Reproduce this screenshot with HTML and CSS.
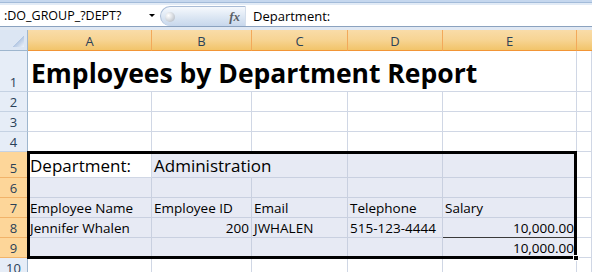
FILE: index.html
```html
<!DOCTYPE html>
<html lang="en">
<head>
  <meta charset="UTF-8">
  <title>Employees by Department Report</title>
  <link rel="stylesheet" href="styles.css">
</head>
<body>
  <div class="top-band"></div>
  <div class="formula-bar">
    <div class="name-box">
      <span class="name-text">:DO_GROUP_?DEPT?</span>
      <span class="drop-arrow"></span>
    </div>
    <div class="fx-pill">
      <span class="knob"></span>
      <span class="fx">fx</span>
    </div>
    <div class="formula-text">Department:</div>
  </div>
  <div class="bar-strip"></div>

  <div class="sheet-wrap">
    <div class="sheet">
      <!-- column headers -->
      <div class="corner"><span class="corner-tri"></span></div>
      <div class="ch">A</div>
      <div class="ch">B</div>
      <div class="ch">C</div>
      <div class="ch">D</div>
      <div class="ch">E</div>
      <div class="ch last"></div>

      <!-- row 1 -->
      <div class="rh">1</div>
      <div class="c title span5">Employees by Department Report</div>
      <div class="c"></div>

      <!-- rows 2-4 -->
      <div class="rh">2</div>
      <div class="c"></div><div class="c"></div><div class="c"></div><div class="c"></div><div class="c"></div><div class="c"></div>
      <div class="rh">3</div>
      <div class="c"></div><div class="c"></div><div class="c"></div><div class="c"></div><div class="c"></div><div class="c"></div>
      <div class="rh">4</div>
      <div class="c"></div><div class="c"></div><div class="c"></div><div class="c"></div><div class="c"></div><div class="c"></div>

      <!-- row 5 -->
      <div class="rh on">5</div>
      <div class="c big">Department:</div>
      <div class="c s big span2">Administration</div>
      <div class="c s"></div>
      <div class="c s"></div>
      <div class="c"></div>

      <!-- row 6 -->
      <div class="rh on">6</div>
      <div class="c s"></div><div class="c s"></div><div class="c s"></div><div class="c s"></div><div class="c s"></div><div class="c"></div>

      <!-- row 7 -->
      <div class="rh on">7</div>
      <div class="c s">Employee Name</div>
      <div class="c s">Employee ID</div>
      <div class="c s">Email</div>
      <div class="c s">Telephone</div>
      <div class="c s">Salary</div>
      <div class="c"></div>

      <!-- row 8 -->
      <div class="rh on">8</div>
      <div class="c s">Jennifer Whalen</div>
      <div class="c s num">200</div>
      <div class="c s">JWHALEN</div>
      <div class="c s">515-123-4444</div>
      <div class="c s num sum-top">10,000.00</div>
      <div class="c"></div>

      <!-- row 9 -->
      <div class="rh on">9</div>
      <div class="c s"></div><div class="c s"></div><div class="c s"></div><div class="c s"></div>
      <div class="c s num">10,000.00</div>
      <div class="c"></div>

      <!-- row 10 -->
      <div class="rh">10</div>
      <div class="c"></div><div class="c"></div><div class="c"></div><div class="c"></div><div class="c"></div><div class="c"></div>
    </div>

    <!-- selection frame over A5:E9, same tracks as the sheet -->
    <div class="sheet overlay">
      <div class="selection"><span class="fill-handle"></span></div>
      <div class="double-line"></div>
    </div>
  </div>
</body>
</html>
```

FILE: styles.css
```css
* {
  margin: 0;
  padding: 0;
  box-sizing: border-box;
}

body {
  width: 592px;
  height: 272px;
  overflow: hidden;
  background: #fff;
  font-family: 'Open Sans', sans-serif;
  color: #000;
}

/* formula bar */
.top-band {
  height: 5px;
  background: linear-gradient(#c5d7ee 0, #c5d7ee 2px, #a3bbd9 2px, #a3bbd9 3px, #e2ebf6 3px);
}

.formula-bar {
  display: flex;
  height: 22px;
  background: #fff;
  border-bottom: 1px solid #8ba2bf;
  font-family: 'Open Sans', sans-serif;
  font-size: 13px;
}

.name-box {
  width: 160px;
  display: flex;
  align-items: center;
  padding-left: 4px;
}

.name-text {
  flex: 1;
  white-space: nowrap;
  font-size: 12.5px;
}

.drop-arrow {
  width: 0;
  height: 0;
  margin-right: 5px;
  border-left: 3px solid transparent;
  border-right: 3px solid transparent;
  border-top: 3px solid #000;
}

.fx-pill {
  width: 86px;
  margin-top: 1px;
  display: flex;
  align-items: center;
  justify-content: space-between;
  padding: 0 5px 0 4px;
  border: 1px solid #a9bcd6;
  border-bottom: none;
  border-right-color: #d4deeb;
  border-top-left-radius: 11px;
  border-bottom-left-radius: 11px;
  background: linear-gradient(#f6f9fd, #dbe6f3 55%, #c7d7ec);
}

.knob {
  width: 10px;
  height: 10px;
  border-radius: 50%;
  background: radial-gradient(circle at 35% 35%, #fff 0, #e3e6ea 35%, #a8afb8 100%);
}

.fx {
  font-family: 'Liberation Serif', serif;
  font-style: italic;
  font-weight: bold;
  font-size: 13px;
  color: #5a5f66;
}

.formula-text {
  flex: 1;
  display: flex;
  align-items: center;
  padding-left: 7px;
}

.bar-strip {
  height: 3px;
  background: #e0e8f3;
}

/* sheet grid */
.sheet-wrap {
  display: grid;
}

.sheet {
  grid-area: 1 / 1;
  display: grid;
  grid-template-columns: 28px 124px 100px 96px 95px 134px 1fr;
  grid-template-rows: 21px 41px 20px 20px 20px 26px 20px 20px 20px 20px 20px;
  font-size: 13.5px;
}

.overlay {
  pointer-events: none;
}

.corner {
  background: #dce6f3;
  border-right: 1px solid #9eb6ce;
  border-bottom: 1px solid #9eb6ce;
  display: flex;
  align-items: flex-end;
  justify-content: flex-end;
  padding: 0 3px 3px 0;
}

.corner-tri {
  width: 11px;
  height: 11px;
  background: linear-gradient(to bottom right, transparent 50%, #b4c8e3 50%, #eef3fa);
}

.ch {
  background: linear-gradient(#f9dca8, #f7d493 50%, #f2c46a);
  border-right: 1px solid #f2a95a;
  border-bottom: 1px solid #f29536;
  color: #2a4158;
  font-size: 13px;
  display: flex;
  align-items: center;
  justify-content: center;
  padding-top: 1px;
}

.ch.last {
  border-right: none;
}

.rh {
  background: #e6edf7;
  border-right: 1px solid #9eb6ce;
  border-bottom: 1px solid #c5d2e3;
  color: #2a4158;
  font-size: 13px;
  display: flex;
  align-items: flex-end;
  justify-content: center;
  padding-bottom: 0;
}

.rh.on {
  background: #fdd699;
  border-right-color: #f29536;
  border-bottom-color: #f1b36a;
}

.c {
  border-right: 1px solid #d0d7e5;
  border-bottom: 1px solid #d0d7e5;
  display: flex;
  align-items: flex-end;
  padding: 0 2px 0 2px;
  white-space: nowrap;
  line-height: 17px;
}

.c.s {
  background: #e7eaf4;
  border-color: #c9d0e0;
}

.c.num {
  justify-content: flex-end;
  padding-right: 2px;
}

.c.sum-top {
  border-bottom-color: #3a3a3a;
}

.span5 {
  grid-column: span 5;
}

.span2 {
  grid-column: span 2;
}

.title {
  font-size: 26.5px;
  font-weight: bold;
  line-height: 34px;
  padding-left: 3px;
  padding-bottom: 1px;
}

.big {
  font-size: 17px;
  line-height: 22px;
  padding-bottom: 0;
}

.selection {
  grid-row: 6 / 11;
  grid-column: 2 / 7;
  margin: -1px 0 -1px -1px;
  border: 3px solid #000;
  position: relative;
}

.fill-handle {
  position: absolute;
  right: -5px;
  bottom: -5px;
  width: 6px;
  height: 6px;
  background: #000;
  border: 1px solid #fff;
}

.double-line {
  grid-row: 10;
  grid-column: 6;
  align-self: end;
  height: 3px;
  margin: 0 3px -1px 0;
  background: #000;
  border-top: 1px solid #fff;
  border-bottom: 1px solid #fff;
}
```
